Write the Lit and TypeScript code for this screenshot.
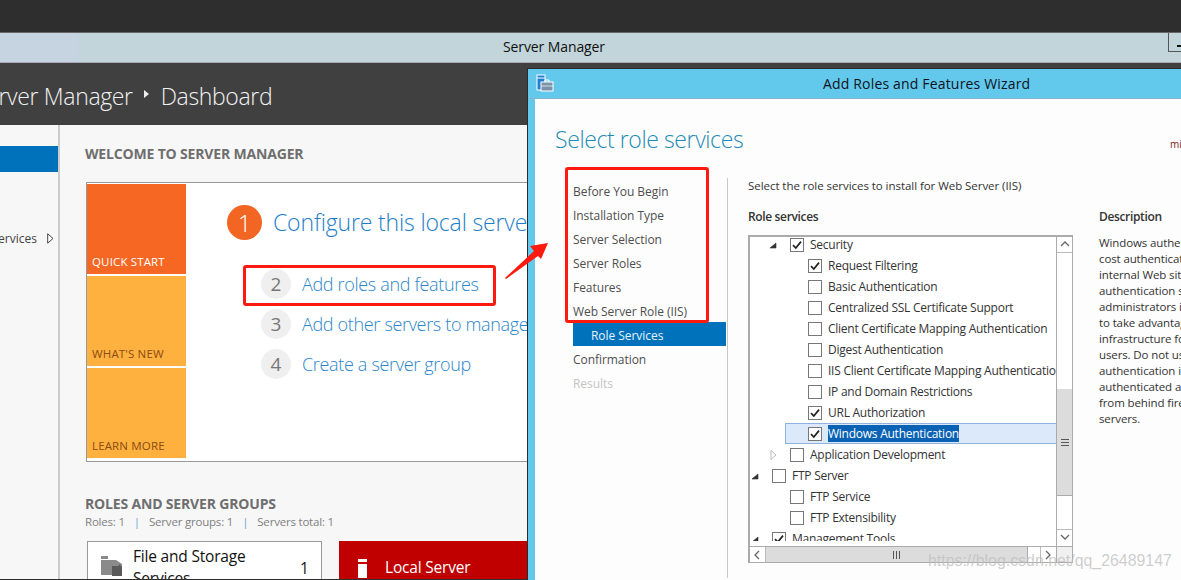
import { LitElement, html, css } from "lit";
import { customElement } from "lit/decorators.js";

const TREE: { t: string; l: number; c?: boolean; e?: string; sel?: boolean }[] = [
  { t: "Security", l: 1, c: true, e: "open" },
  { t: "Request Filtering", l: 2, c: true },
  { t: "Basic Authentication", l: 2 },
  { t: "Centralized SSL Certificate Support", l: 2 },
  { t: "Client Certificate Mapping Authentication", l: 2 },
  { t: "Digest Authentication", l: 2 },
  { t: "IIS Client Certificate Mapping Authentication", l: 2 },
  { t: "IP and Domain Restrictions", l: 2 },
  { t: "URL Authorization", l: 2, c: true },
  { t: "Windows Authentication", l: 2, c: true, sel: true },
  { t: "Application Development", l: 1, e: "closed" },
  { t: "FTP Server", l: 0, e: "open" },
  { t: "FTP Service", l: 1 },
  { t: "FTP Extensibility", l: 1 },
  { t: "Management Tools", l: 0, c: true, e: "open" },
];

const NAV = ["Before You Begin", "Installation Type", "Server Selection", "Server Roles", "Features", "Web Server Role (IIS)"];
const DESC = [
  "Windows authentication (NTLM",
  "cost authentication solution for",
  "internal Web sites. This",
  "authentication scheme allows",
  "administrators in a Windows",
  "to take advantage of their",
  "infrastructure for authenticating",
  "users. Do not use Windows",
  "authentication if users who are",
  "authenticated access your site",
  "from behind firewalls and proxy",
  "servers.",
];

@customElement("app-root")
export class AppRoot extends LitElement {
  static styles = css`
    :host { display: block; width: 1181px; height: 580px; position: relative; overflow: hidden; background: #2e2e2e;
      font-family: "Open Sans", "Noto Sans", sans-serif; }
    .top { height: 32px; background: #2e2e2e; border-bottom: 1px solid #666; }
    .tbar { height: 29px; background: #c2d5da; display: flex; align-items: center; position: relative; border-bottom: 1px solid #aab; box-sizing: content-box; }
    .tbar .tint { width: 78px; height: 29px; background: #c6d3e0; flex: none; }
    .tbar .name { margin: -2px 0 0 425px; font-size: 14px; color: #111; letter-spacing: -0.1px; }
    .min { position: absolute; right: 0; top: 0; width: 12px; height: 18px; border: 1px solid #555; border-right: 0; border-top: 0; }
    .min::after { content: ""; position: absolute; right: 0; top: 12px; width: 4px; height: 2px; background: #111; }
    .head { height: 62px; box-sizing: border-box; padding-top: 3px; background: #404040; display: flex; align-items: center; color: #f2f2f2; font-size: 23px; font-weight: 300; white-space: nowrap; letter-spacing: -0.35px; }
    .head .crumb { margin-left: -26px; }
    .head .sep { width: 0; height: 0; border-left: 5px solid #eee; border-top: 4px solid transparent; border-bottom: 4px solid transparent; margin: 0 11.5px 4px 11.5px; }
    .main { display: flex; height: 454px; background: #f7f7f7; }
    .side { width: 58px; border-right: 2px solid #ccc; flex: none; overflow: hidden; padding-top: 21px; box-sizing: content-box; }
    .side .active { height: 26px; background: #0072bc; }
    .side .svc { height: 20px; margin-top: 56px; display: flex; justify-content: flex-end; align-items: center; white-space: nowrap; font-size: 12px; color: #444; padding-right: 4px; gap: 10px; }
    .side .svc svg { flex: none; }
    .cont { flex: 1; padding: 20px 0 0 25px; overflow: hidden; }
    h2 { margin: 0; font-size: 14px; line-height: 18px; font-weight: 700; color: #6e6e6e; letter-spacing: -0.17px; white-space: nowrap; }
    .welcome { margin: 19px 0 0 1px; height: 276px; width: 600px; border: 1px solid #999; background: #fff; display: flex; padding: 1px 1px 1px 0; }
    .tiles { width: 99px; flex: none; display: flex; flex-direction: column; gap: 2px; }
    .tile { height: 90px; background: #ffb140; color: #8a4a10; font-size: 11.5px; display: flex; align-items: flex-end; padding: 0 0 5px 5px; box-sizing: border-box; letter-spacing: 0.15px; }
    .tile.q { background: #f56723; color: #fff; }
    .steps { padding: 21px 0 0 41px; }
    .one { display: flex; align-items: center; gap: 11px; height: 35px; margin-bottom: 24px; }
    .one b { width: 35px; height: 35px; border-radius: 50%; background: #f26522; color: #fff; font-weight: 300; font-size: 24px; display: flex; align-items: center; justify-content: center; }
    .one span { color: #1e7ec8; font-size: 23px; font-weight: 300; white-space: nowrap; letter-spacing: -0.15px; margin-top: -2px; }
    .st { display: flex; align-items: center; gap: 11px; height: 40px; margin-left: 34px; }
    .st b { width: 30px; height: 30px; border-radius: 50%; background: #efefef; color: #777; font-weight: 400; font-size: 19px; display: flex; align-items: center; justify-content: center; }
    .st span { color: #2b86cb; font-size: 18px; font-weight: 300; white-space: nowrap; letter-spacing: -0.33px; }
    .rg { margin-top: 33px; }
    .sub { font-size: 11.5px; color: #808080; line-height: 18px; display: flex; gap: 9px; white-space: nowrap; letter-spacing: -0.2px; }
    .sub i { font-style: normal; color: #6aa6d8; }
    .cards { display: flex; margin: 10px 0 0 2px; gap: 17px; }
    .card { width: 235px; height: 80px; box-sizing: border-box; border: 1px solid #999; background: #fff; display: flex; padding: 3px 0 0 13px; color: #111; font-size: 15.5px; line-height: 22px; }
    .card svg { flex: none; margin: 11px 11px 0 0; }
    .card .nm { width: 130px; letter-spacing: -0.2px; }
    .card .n { margin: 12px 0 0 37px; }
    .local { width: 200px; height: 80px; background: #c00000; color: #fff; font-size: 15.5px; display: flex; padding: 15px 0 0 19px; gap: 18px; box-sizing: border-box; letter-spacing: -0.2px; }
    .local svg { flex: none; margin-top: 3px; }

    .wiz { position: absolute; left: 527px; top: 68px; width: 700px; height: 520px; background: #62c9ec; border-left: 1px solid #2b2b2b; border-top: 1px solid #2b2b2b; }
    .wt { height: 30px; display: flex; align-items: center; position: relative; font-size: 14px; color: #112; letter-spacing: 0.17px; padding-left: 295px; border-bottom: 1px solid #86b3c9; box-sizing: border-box; white-space: nowrap; }
    .wt svg { position: absolute; left: 8px; top: 5px; }
    .wb { margin-left: 7px; background: #fdfdfd; height: 490px; padding: 24px 0 0 20px; box-sizing: border-box; position: relative; }
    h1 { margin: 0; font-size: 23px; line-height: 32px; font-weight: 300; color: #1c8bb5; letter-spacing: -0.4px; }
    .mi { position: absolute; left: 635px; top: 38px; font-size: 10px; color: #722; }
    .cols { display: flex; margin-top: 23px; }
    .nav { border-right: 1px solid #c8c8c8; padding: 0 1px 0 18px; box-sizing: border-box; height: 400px; width: 173px; flex: none; }
    .nav div { height: 24px; line-height: 28px; font-size: 12px; color: #4e4e4e; letter-spacing: -0.05px; white-space: nowrap; }
    .nav .cur { background: #0072bc; color: #e8f2fa; padding-left: 18px; }
    .nav .dis { color: #c4c4c4; }
    .mid { width: 325px; margin-left: 20px; flex: none; }
    .intro { font-size: 11.5px; line-height: 16px; color: #333; white-space: nowrap; letter-spacing: -0.05px; }
    .lab { margin-top: 15px; font-size: 12px; line-height: 16px; font-weight: 600; color: #333; letter-spacing: -0.35px; }
    .tree { margin-top: 10px; height: 328px; border: 2px solid #ababab; border-right-width: 1px; box-sizing: border-box; display: grid; grid-template-columns: 306px 16px; grid-template-rows: 309px 16px; background: #fff; }
    .rows { overflow: hidden; height: 304px; }
    .rowsin { margin-top: -3px; }
    .row { height: 21px; display: flex; align-items: center; position: relative; font-size: 12px; color: #333; white-space: nowrap; letter-spacing: -0.25px; }
    .row.sel::before { content: ""; position: absolute; left: 35px; right: 0; top: 0; bottom: 0; background: #dbe9fb; border: 1px solid #8fb2dc; border-right: 0; }
    .row > * { position: relative; }
    .exp { width: 18px; flex: none; height: 12px; }
    .exp svg { display: block; overflow: visible; }
    .cb { width: 12px; height: 12px; border: 1px solid #777; background: #fff; flex: none; margin-right: 6px; display: block; }
    .hl { background: #0a62b4; color: #fff; }
    .vs { border-left: 1px solid #ababab; display: flex; flex-direction: column; background: #fff; }
    .sb { height: 15px; flex: none; border-bottom: 1px solid #bbb; display: flex; align-items: center; justify-content: center; box-sizing: content-box; }
    .th { height: 106px; background: #dcdcdc; margin-top: 136px; flex: none; display: flex; align-items: center; justify-content: center; border-bottom: 1px solid #ababab; }
    .sb.b { margin-top: auto; border-top: 1px solid #bbb; border-bottom: 0; height: 16px; }
    .hs { border-top: 1px solid #ababab; display: flex; background: #fff; }
    .hb { width: 16px; flex: none; display: flex; align-items: center; justify-content: center; border-right: 1px solid #bbb; box-sizing: border-box; }
    .hth { width: 261px; background: #dcdcdc; flex: none; display: flex; align-items: center; justify-content: center; border-right: 1px solid #ababab; }
    .hb.r { margin-left: auto; border-right: 0; border-left: 1px solid #bbb; }
    .corner { border-top: 1px solid #ababab; border-left: 1px solid #ababab; background: #f0f0f0; }
    .desc { margin-left: 26px; padding-top: 31px; width: 300px; flex: none; }
    .desc .lab { margin: 0 0 10px; }
    .desc p { margin: 0; font-size: 11.5px; line-height: 16px; color: #333; white-space: nowrap; letter-spacing: -0.12px; }

    .ann { position: absolute; border: 3px solid #ff1a10; border-radius: 3px; box-sizing: border-box; pointer-events: none; }
    .a1 { left: 243px; top: 265px; width: 253px; height: 41px; }
    .a2 { left: 565px; top: 167px; width: 144px; height: 156px; }
    .arrow { position: absolute; left: 500px; top: 238px; }
    .wm { position: absolute; left: 928px; top: 552px; font-family: "Liberation Sans", sans-serif; font-size: 15.9px; color: rgba(190,190,190,.75); white-space: nowrap; }
  `;

  chev(d: string) {
    const p: Record<string, string> = { u: "M1 6L5 2L9 6", d: "M1 2L5 6L9 2", l: "M6 1L2 5L6 9", r: "M2 1L6 5L2 9" };
    return html`<svg width="10" height="10" viewBox="0 0 10 10"><path d=${p[d]} fill="none" stroke="#666" stroke-width="1.3"/></svg>`;
  }

  row(r: (typeof TREE)[number]) {
    return html`<div class="row ${r.sel ? "sel" : ""}" style="padding-left:${4 + r.l * 18}px">
      <span class="exp">${r.e === "open"
        ? html`<svg width="10" height="12" viewBox="0 0 10 12"><path d="M-2 9L4 9L4 4Z" fill="#333" stroke="#333" stroke-width=".6"/></svg>`
        : r.e === "closed"
          ? html`<svg width="10" height="12" viewBox="0 0 10 12"><path d="M-1 1.5L4 6L-1 10.5Z" fill="#fff" stroke="#bbb"/></svg>`
          : ""}</span>
      <span class="cb">${r.c
        ? html`<svg width="12" height="12" viewBox="0 0 12 12" style="display:block"><path d="M2 6.2L4.8 9L10 2.6" fill="none" stroke="#222" stroke-width="1.7"/></svg>`
        : ""}</span>
      <span class=${r.sel ? "hl" : ""}>${r.t}</span>
    </div>`;
  }

  render() {
    return html`
      <div class="top"></div>
      <div class="tbar"><span class="tint"></span><span class="name">Server Manager</span><span class="min"></span></div>
      <div class="head"><span class="crumb">Server Manager</span><span class="sep"></span><span>Dashboard</span></div>
      <div class="main">
        <div class="side">
          <div class="active"></div>
          <div class="svc"><span>File and Storage Services</span><svg width="7" height="11" viewBox="0 0 7 11"><path d="M.7 .8L6 5.5L.7 10.2Z" fill="#fff" stroke="#444"/></svg></div>
        </div>
        <div class="cont">
          <h2>WELCOME TO SERVER MANAGER</h2>
          <div class="welcome">
            <div class="tiles">
              <div class="tile q">QUICK START</div>
              <div class="tile">WHAT'S NEW</div>
              <div class="tile">LEARN MORE</div>
            </div>
            <div class="steps">
              <div class="one"><b>1</b><span>Configure this local server</span></div>
              <div class="st"><b>2</b><span>Add roles and features</span></div>
              <div class="st"><b>3</b><span>Add other servers to manage</span></div>
              <div class="st"><b>4</b><span>Create a server group</span></div>
            </div>
          </div>
          <div class="rg">
            <h2>ROLES AND SERVER GROUPS</h2>
            <div class="sub"><span>Roles: 1</span><i>|</i><span>Server groups: 1</span><i>|</i><span>Servers total: 1</span></div>
            <div class="cards">
              <div class="card">
                <svg width="21" height="20" viewBox="0 0 21 20"><path d="M0 0H7V3H0Z" fill="#8a8a8a"/><path d="M0 4H15L21 8V13H11V19H0Z" fill="#8a8a8a"/><path d="M11 10H18V8L21 11V20H11Z" fill="#5a5a5a"/></svg>
                <div class="nm">File and Storage Services</div><div class="n">1</div>
              </div>
              <div class="local">
                <svg width="9" height="19" viewBox="0 0 9 19"><path d="M0 0H9V3H0Z M0 5H9V19H0Z" fill="#fff"/></svg>
                <span>Local Server</span>
              </div>
            </div>
          </div>
        </div>
      </div>

      <div class="wiz">
        <div class="wt">
          <svg width="18" height="18" viewBox="0 0 18 18"><rect x="1" y="1" width="8" height="15" fill="#1f7fd0" stroke="#fff"/><path d="M1 4H9" stroke="#fff"/><rect x="5" y="8" width="12" height="9" fill="#7b93a8" stroke="#fff"/><path d="M9 8V6H13V8" fill="none" stroke="#fff"/><path d="M5 12H17" stroke="#fff" stroke-width=".7"/></svg>
          Add Roles and Features Wizard
        </div>
        <div class="wb">
          <h1>Select role services</h1>
          <span class="mi">mi</span>
          <div class="cols">
            <div class="nav">
              ${NAV.map((n) => html`<div>${n}</div>`)}
              <div class="cur">Role Services</div>
              <div>Confirmation</div>
              <div class="dis">Results</div>
            </div>
            <div class="mid">
              <div class="intro">Select the role services to install for Web Server (IIS)</div>
              <div class="lab">Role services</div>
              <div class="tree">
                <div class="rows"><div class="rowsin">${TREE.map((r) => this.row(r))}</div></div>
                <div class="vs">
                  <div class="sb">${this.chev("u")}</div>
                  <div class="th"><svg width="8" height="7"><path d="M0 .5H8M0 3.5H8M0 6.5H8" stroke="#555"/></svg></div>
                  <div class="sb b">${this.chev("d")}</div>
                </div>
                <div class="hs">
                  <div class="hb">${this.chev("l")}</div>
                  <div class="hth"><svg width="7" height="8"><path d="M.5 0V8M3.5 0V8M6.5 0V8" stroke="#555"/></svg></div>
                  <div class="hb r">${this.chev("r")}</div>
                </div>
                <div class="corner"></div>
              </div>
            </div>
            <div class="desc">
              <div class="lab">Description</div>
              <p>${DESC.map((d) => html`${d}<br />`)}</p>
            </div>
          </div>
        </div>
      </div>

      <div class="ann a1"></div>
      <div class="ann a2"></div>
      <svg class="arrow" width="52" height="44" viewBox="500 238 52 44"><path d="M548 243L530 246L534 251L505 278L506 279L538 256L541 259Z" fill="#ff1a10"/></svg>
      <div class="wm">https://blog.csdn.net/qq_26489147</div>
    `;
  }
}
